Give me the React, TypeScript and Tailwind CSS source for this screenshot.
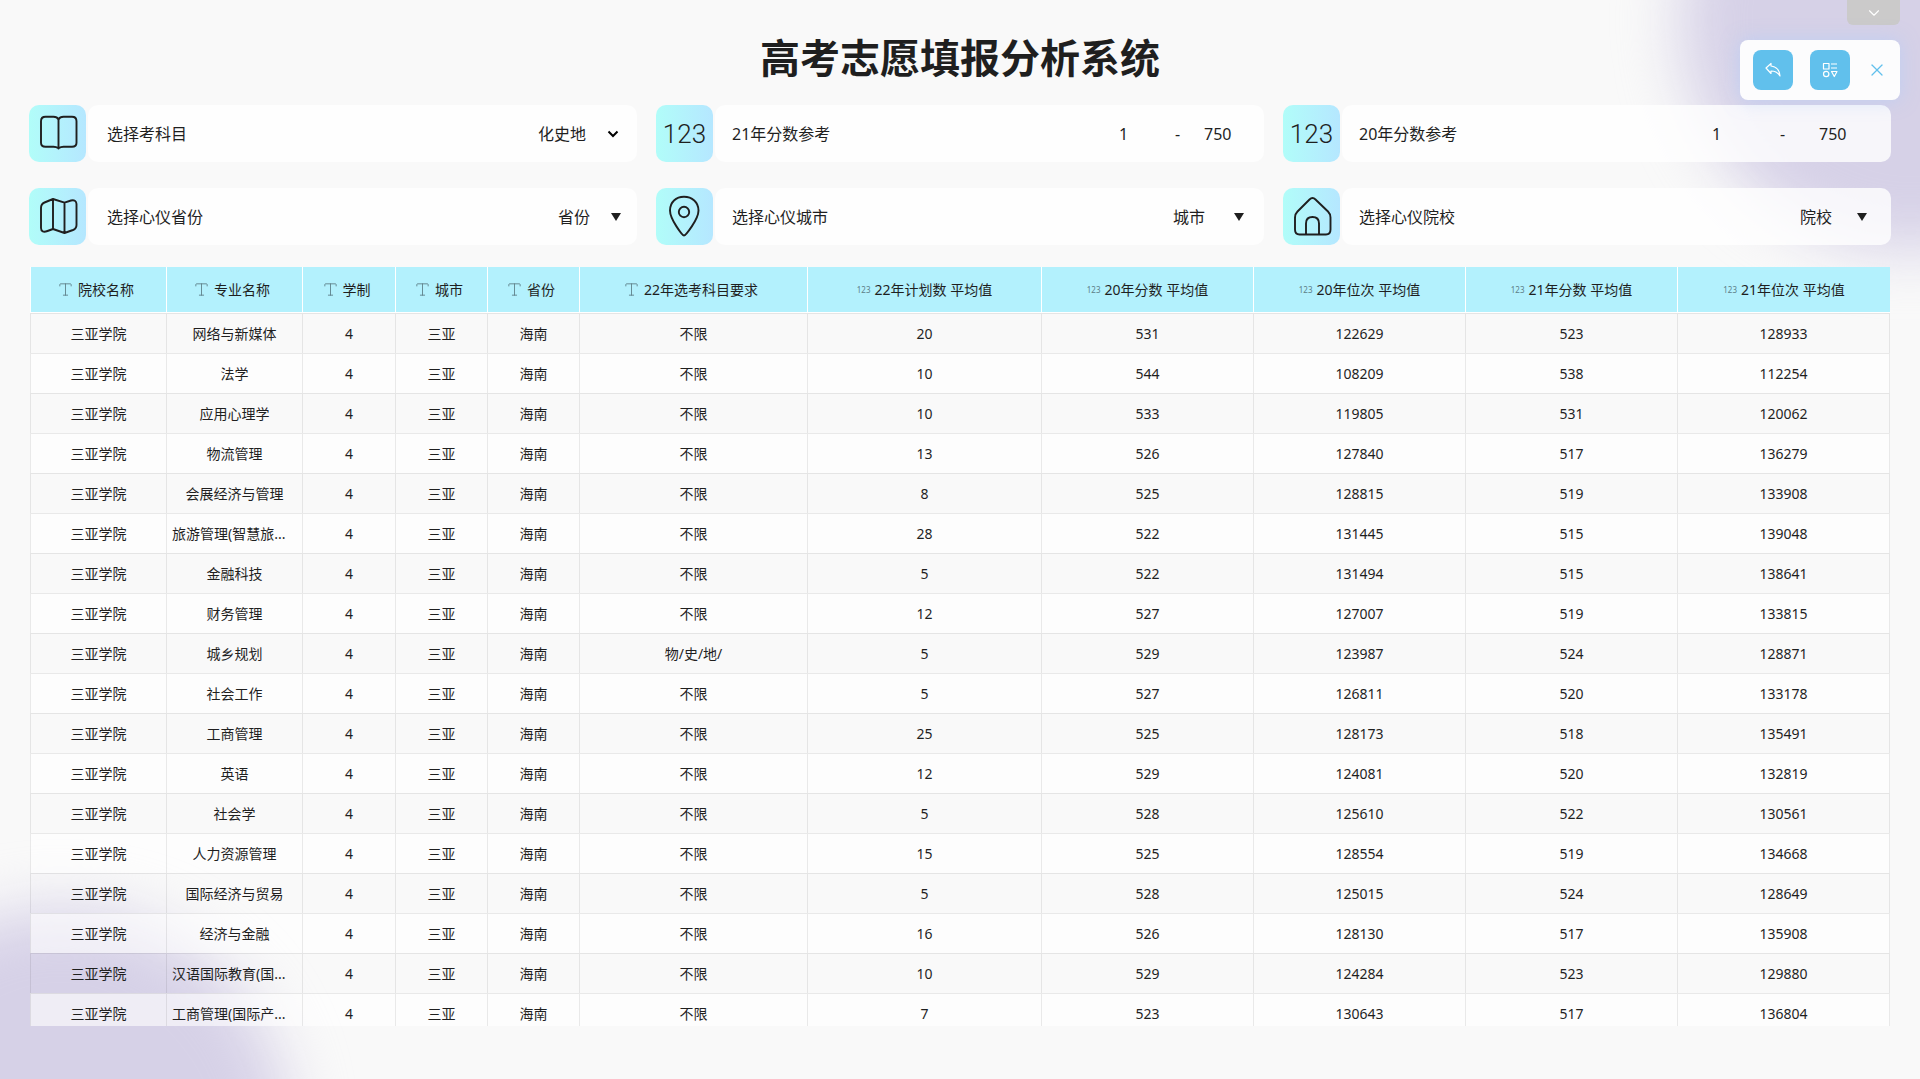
import React from "react";
import { Type, ChevronDown, X } from "lucide-react";

type Column = { label: string; kind: "text" | "number"; width: string };

const columns: Column[] = [
  { label: "院校名称", kind: "text", width: "w-[136px]" },
  { label: "专业名称", kind: "text", width: "w-[136px]" },
  { label: "学制", kind: "text", width: "w-[93px]" },
  { label: "城市", kind: "text", width: "w-[92px]" },
  { label: "省份", kind: "text", width: "w-[92px]" },
  { label: "22年选考科目要求", kind: "text", width: "w-[228px]" },
  { label: "22年计划数 平均值", kind: "number", width: "w-[234px]" },
  { label: "20年分数 平均值", kind: "number", width: "w-[212px]" },
  { label: "20年位次 平均值", kind: "number", width: "w-[212px]" },
  { label: "21年分数 平均值", kind: "number", width: "w-[212px]" },
  { label: "21年位次 平均值", kind: "number", width: "w-auto" }
];

// major, subject requirement, plan, 20 score, 20 rank, 21 score, 21 rank
const majors: [string, string, number, number, number, number, number][] = [
  ["网络与新媒体", "不限", 20, 531, 122629, 523, 128933],
  ["法学", "不限", 10, 544, 108209, 538, 112254],
  ["应用心理学", "不限", 10, 533, 119805, 531, 120062],
  ["物流管理", "不限", 13, 526, 127840, 517, 136279],
  ["会展经济与管理", "不限", 8, 525, 128815, 519, 133908],
  ["旅游管理(智慧旅...", "不限", 28, 522, 131445, 515, 139048],
  ["金融科技", "不限", 5, 522, 131494, 515, 138641],
  ["财务管理", "不限", 12, 527, 127007, 519, 133815],
  ["城乡规划", "物/史/地/", 5, 529, 123987, 524, 128871],
  ["社会工作", "不限", 5, 527, 126811, 520, 133178],
  ["工商管理", "不限", 25, 525, 128173, 518, 135491],
  ["英语", "不限", 12, 529, 124081, 520, 132819],
  ["社会学", "不限", 5, 528, 125610, 522, 130561],
  ["人力资源管理", "不限", 15, 525, 128554, 519, 134668],
  ["国际经济与贸易", "不限", 5, 528, 125015, 524, 128649],
  ["经济与金融", "不限", 16, 526, 128130, 517, 135908],
  ["汉语国际教育(国...", "不限", 10, 529, 124284, 523, 129880],
  ["工商管理(国际产...", "不限", 7, 523, 130643, 517, 136804]
];

const iconProps = {
  className: "w-[57px] h-[57px]",
  viewBox: "0 0 57 57",
  fill: "none",
  stroke: "currentColor",
  strokeWidth: 1.9,
  strokeLinejoin: "round" as const,
  strokeLinecap: "round" as const
};

const BookIcon = () => (
  <svg {...iconProps}>
    <path d="M29.500 14.500c-1-2-2.500-2.800-5-2.800h-8c-3 0-4.500 1.500-4.500 4.500v21.500c0 3 1.500 4 4.500 4h8c2 0 3.500.5 5 1.500 1.500-1 3-1.500 5-1.500h8.500c3 0 4.500-1 4.500-4V16.200c0-3-1.500-4.500-4.500-4.500h-8.500c-2.500 0-4 .8-5 2.800zM29.500 14.500v29" />
  </svg>
);

const MapIcon = () => (
  <svg {...iconProps}>
    <path d="M24 11l11.500 3.700 6.500-2.200c3-1 5.500.5 5.500 3.500v21c0 2.500-1 4-3.500 5l-8.500 3L24 41l-5.500 2c-4 1.500-6.500.5-6.500-3V20c0-3 1-4.500 3.500-5.500zM24 11v30M35.500 14.700V45" />
  </svg>
);

const PinIcon = () => (
  <svg {...iconProps}>
    <path d="M28 47.500c-1.500 0-14-16-14-25C14 14 20 8.800 28 8.800s14.500 5.200 14.500 13.700c0 9-13 25-14.500 25z" />
    <circle cx="28" cy="24" r="5.200" />
  </svg>
);

const HomeIcon = () => (
  <svg {...iconProps}>
    <path d="M26.500 11.500c2-2 4-2 6 0L45 23.500c2 2 2.500 3.500 2.500 6v12c0 3-1.500 5-4.500 5H16.500c-3 0-4.500-2-4.500-5v-12c0-2.500.5-4 2.500-6zM23 46.500v-11c0-4 2.500-6.500 6.500-6.500s6.500 2.500 6.500 6.500v11" />
  </svg>
);

const NumberIcon = () => (
  <span aria-hidden="true" className="font-[Roboto,sans-serif] font-light text-[26px] leading-none">123</span>
);

const Triangle = () => (
  <svg className="w-[10px] h-2 pointer-events-none" viewBox="0 0 10 8">
    <path d="M0 0h10L5 8z" fill="currentColor" />
  </svg>
);

interface FieldProps {
  id: string;
  label: string;
  icon: React.ReactNode;
  padding: string;
  children: React.ReactNode;
}

function Field({ id, label, icon, padding, children }: FieldProps) {
  return (
    <div className="flex gap-[2px] h-[57px]">
      <div className="w-[57px] shrink-0 rounded-[10px] bg-linear-to-r from-[#b1fdf9] to-[#b5e7ff] flex items-center justify-center">
        {icon}
      </div>
      <div className={`flex-1 flex items-center rounded-[10px] bg-white/80 ${padding}`}>
        <label htmlFor={id} className="mr-auto">{label}</label>
        {children}
      </div>
    </div>
  );
}

const selectClass = "appearance-none bg-transparent text-base outline-none cursor-pointer";
const inputClass = "bg-transparent text-base outline-none";

export default function App() {
  return (
    <div className="relative h-screen overflow-hidden bg-[#f9f9f9] text-[#1f1f1f] text-base font-['Noto_Sans','Noto_Sans_CJK_SC',sans-serif]">
      {/* Background glow */}
      <div className="absolute -top-[210px] -right-[220px] w-[460px] h-[460px] rounded-full bg-[#d6d1e7] blur-[30px]"></div>
      <div className="absolute -bottom-[290px] -left-[170px] w-[460px] h-[460px] rounded-full bg-[#d6d1e7] blur-[30px]"></div>

      {/* Floating toolbar */}
      <button aria-label="展开" className="absolute top-0 right-5 z-10 w-[53px] h-[25px] rounded-b-md bg-[#cbcaca] text-white flex items-center justify-center">
        <ChevronDown className="w-[18px] h-[18px]" strokeWidth={1.5} />
      </button>
      <div className="absolute top-10 right-5 z-10 w-40 h-[60px] pl-[13px] flex items-center gap-[17px] rounded-lg bg-[#fcfcfd] shadow-[0_0_18px_rgba(170,205,255,0.5)]">
        <button aria-label="返回" className="w-10 h-10 rounded-lg bg-[#61c0ec] text-white flex items-center justify-center">
          <svg className="w-4 h-4" viewBox="0 0 16 16" fill="none" stroke="currentColor" strokeWidth="1.2" strokeLinejoin="round">
            <path d="M1 6l5-4.500v2.500c5 .5 8.500 4 9 10-2-3.500-5-5-9-5v2.500z" />
          </svg>
        </button>
        <button aria-label="组件" className="w-10 h-10 rounded-lg bg-[#61c0ec] text-white flex items-center justify-center">
          <svg className="w-4 h-4" viewBox="0 0 16 16" fill="none" stroke="currentColor" strokeWidth="1.2" strokeLinejoin="round">
            <path d="M1.500 1.500h5.500v5.500h-5.500zM9 2h6M9 6h6M9.500 9.500h5.500l-2.700 5z" />
            <circle cx="4.200" cy="12" r="2.700" />
          </svg>
        </button>
        <button aria-label="关闭" className="text-[#61c0ec]">
          <X className="w-5 h-5" strokeWidth={1.5} />
        </button>
      </div>

      <main className="relative h-full flex flex-col px-[29px] pt-[29px] pb-[53px]">
        <h1 className="h-[76px] text-[40px] leading-[58px] font-bold text-center">高考志愿填报分析系统</h1>

        {/* Filters */}
        <div className="grid grid-cols-3 gap-x-[19px] gap-y-[26px]">
          <Field id="subject" label="选择考科目" icon={<BookIcon />} padding="pl-[19px] pr-[18px] gap-5">
            <select id="subject" className={selectClass}>
              <option>化史地</option>
            </select>
            <svg className="w-3 h-2 pointer-events-none" viewBox="0 0 12 8" fill="none" stroke="#000" strokeWidth="2">
              <path d="M1.500 1.500L6 6l4.500-4.500" />
            </svg>
          </Field>
          <Field id="score21" label="21年分数参考" icon={<NumberIcon />} padding="pl-[17px] pr-6">
            <input id="score21" defaultValue="1" className={`${inputClass} w-14`} />
            <span className="w-[29px]">-</span>
            <input aria-label="21年最高分" defaultValue="750" className={`${inputClass} w-9`} />
          </Field>
          <Field id="score20" label="20年分数参考" icon={<NumberIcon />} padding="pl-[17px] pr-9">
            <input id="score20" defaultValue="1" className={`${inputClass} w-[68px]`} />
            <span className="w-[39px]">-</span>
            <input aria-label="20年最高分" defaultValue="750" className={`${inputClass} w-9`} />
          </Field>
          <Field id="province" label="选择心仪省份" icon={<MapIcon />} padding="pl-[19px] pr-4 gap-5">
            <select id="province" className={selectClass}>
              <option>省份</option>
            </select>
            <Triangle />
          </Field>
          <Field id="city" label="选择心仪城市" icon={<PinIcon />} padding="pl-[17px] pr-5 gap-7">
            <select id="city" className={selectClass}>
              <option>城市</option>
            </select>
            <Triangle />
          </Field>
          <Field id="school" label="选择心仪院校" icon={<HomeIcon />} padding="pl-[17px] pr-6 gap-6">
            <select id="school" className={selectClass}>
              <option>院校</option>
            </select>
            <Triangle />
          </Field>
        </div>

        {/* Results */}
        <div className="mt-[22px] px-px flex-1 min-h-0 overflow-hidden">
          <table className="w-full table-fixed border-separate border-spacing-0 text-sm text-center">
            <thead>
              <tr>
                {columns.map((col) => (
                  <th key={col.label} className={`${col.width} h-[46px] p-0 font-normal bg-[#b3f1fd] border-l border-b border-white`}>
                    {col.kind === "text" ? (
                      <div className="flex items-center justify-center gap-1 pr-[6px]">
                        <Type className="w-[17px] h-[17px] text-[#5d7f88]" strokeWidth={1.25} />
                        <span>{col.label}</span>
                      </div>
                    ) : (
                      <div className="flex items-center justify-center gap-1">
                        <span aria-hidden="true" className="text-[8px] text-[#5d8088]">123</span>
                        <span>{col.label}</span>
                      </div>
                    )}
                  </th>
                ))}
              </tr>
            </thead>
            <tbody>
              {majors.map(([major, ...rest]) => (
                <tr key={major} className="even:bg-white/60">
                  {["三亚学院", major, 4, "三亚", "海南", ...rest].map((value, i) => (
                    <td
                      key={i}
                      className={`h-10 py-0 border-t border-l last:border-r border-black/8 truncate ${
                        String(value).endsWith("...") ? "pl-[5px] text-left" : "px-0"
                      }`}
                    >
                      {value}
                    </td>
                  ))}
                </tr>
              ))}
            </tbody>
          </table>
        </div>
      </main>
    </div>
  );
}
